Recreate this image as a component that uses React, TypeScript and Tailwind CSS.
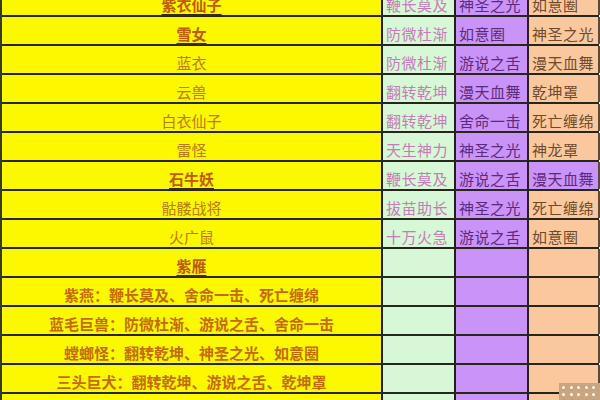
import React from "react";

type Row = {
  name: string;
  u?: boolean;
  long?: boolean;
  g?: string;
  p?: string;
  o?: string;
  oPurple?: boolean;
};

const rows: Row[] = [
  { name: "紫衣仙子", u: true, g: "鞭长莫及", p: "神圣之光", o: "如意圈" },
  { name: "雪女", u: true, g: "防微杜渐", p: "如意圈", o: "神圣之光" },
  { name: "蓝衣", g: "防微杜渐", p: "游说之舌", o: "漫天血舞" },
  { name: "云兽", g: "翻转乾坤", p: "漫天血舞", o: "乾坤罩" },
  { name: "白衣仙子", g: "翻转乾坤", p: "舍命一击", o: "死亡缠绵" },
  { name: "雷怪", g: "天生神力", p: "神圣之光", o: "神龙罩" },
  { name: "石牛妖", u: true, g: "鞭长莫及", p: "游说之舌", o: "漫天血舞", oPurple: true },
  { name: "骷髅战将", g: "拔苗助长", p: "神圣之光", o: "死亡缠绵" },
  { name: "火广鼠", g: "十万火急", p: "游说之舌", o: "如意圈" },
  { name: "紫雁", u: true },
  { name: "紫燕：鞭长莫及、舍命一击、死亡缠绵", long: true },
  { name: "蓝毛巨兽：防微杜渐、游说之舌、舍命一击", long: true },
  { name: "螳螂怪：翻转乾坤、神圣之光、如意圈", long: true },
  { name: "三头巨犬：翻转乾坤、游说之舌、乾坤罩", long: true },
  { name: "" },
];

const font = {
  fontFamily: '"Noto Sans CJK SC", "Noto Sans", sans-serif',
};

export default function App() {
  return (
    <div className="w-[600px] h-[400px] overflow-hidden bg-white relative" style={font}>
      <div className="mt-[-12px] w-[599px] border-l-2 border-[#3a3a14]">
        {rows.map((r, i) => (
          <div key={i} className="flex h-[29px] border-b-2 border-[#26261a]">
            <div
              className={
                "w-[379px] shrink-0 bg-[#fcf800] flex items-end justify-center pb-[3px] text-[15px] leading-none " +
                (r.long ? "text-[#c66b00] font-semibold" : "text-[#bb7a12]")
              }
            >
              <span
                className={
                  r.u
                    ? "underline decoration-[#3a2a10] decoration-2 underline-offset-[3px] text-[#c05a00] font-semibold"
                    : ""
                }
              >
                {r.name}
              </span>
            </div>
            <div className="w-[2px] shrink-0 bg-[#1e1e1e]" />
            <div className="w-[71px] shrink-0 bg-[#d6f8d6] flex items-end pb-[3px] pl-[3px] text-[15px] leading-none text-[#c57cb6] tracking-[0.5px]">
              {r.g}
            </div>
            <div className="w-[2px] shrink-0 bg-[#1e1e1e]" />
            <div className="w-[71px] shrink-0 bg-[#c993f8] flex items-end pb-[3px] pl-[3px] text-[15px] leading-none text-[#5c2a7c] tracking-[0.5px]">
              {r.p}
            </div>
            <div className="w-[2px] shrink-0 bg-[#2a1e1e]" />
            <div
              className={
                "w-[69px] shrink-0 flex items-end pb-[3px] pl-[3px] text-[15px] leading-none tracking-[0.5px] " +
                (r.oPurple ? "bg-[#c993f8] text-[#5c2a7c]" : "bg-[#fbc89e] text-[#6e4a2c]")
              }
            >
              {r.o}
            </div>
            <div className="w-[2px] shrink-0 bg-[#5a4a3a]" />
          </div>
        ))}
      </div>
      <div className="absolute left-[559px] top-[383px] w-[41px] h-[17px] bg-[#c9a47e] grid grid-cols-5 gap-x-[3px] gap-y-[3px] p-[3px]">
        {Array.from({ length: 10 }).map((_, k) => (
          <span key={k} className="w-[3px] h-[3px] bg-white rounded-full" />
        ))}
      </div>
    </div>
  );
}
